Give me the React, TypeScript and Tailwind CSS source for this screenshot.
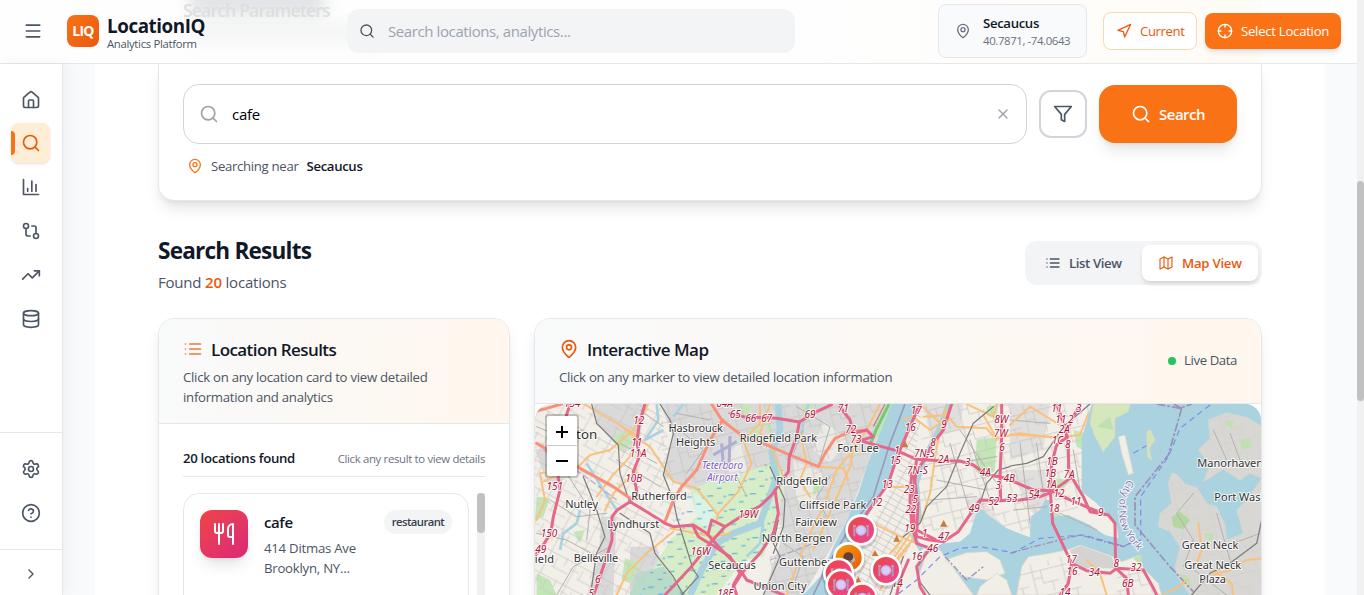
import React from "react";
import {
  ChevronRight,
  Database,
  GitCompare,
  House,
  MapPin,
  Menu,
  Search,
  Settings,
  TrendingUp,
  X,
} from "lucide-react";

type IconProps = { className?: string; paths: string[]; width?: number };

function Glyph({ className = "", paths, width = 2 }: IconProps) {
  return (
    <svg
      viewBox="0 0 24 24"
      fill="none"
      stroke="currentColor"
      strokeWidth={width}
      strokeLinecap="round"
      strokeLinejoin="round"
      className={className}
    >
      {paths.map((d) => (
        <path key={d} d={d} />
      ))}
    </svg>
  );
}

const BARS = ["M3 3v18h18", "M18 17V9", "M13 17V5", "M8 17v-3"];
const HELP = [
  "M12 2a10 10 0 1 0 0 20a10 10 0 1 0 0-20",
  "M9.09 9a3 3 0 0 1 5.83 1c0 2-3 3-3 3",
  "M12 17h.01",
];
const LIST = ["M8 6h13", "M8 12h13", "M8 18h13", "M3 6h.01", "M3 12h.01", "M3 18h.01"];
const CROSSHAIR = [
  "M12 2a10 10 0 1 0 0 20a10 10 0 1 0 0-20",
  "M22 12h-4",
  "M6 12H2",
  "M12 6V2",
  "M12 22v-4",
];
const NAVIGATION = ["M3 11L22 2L13 21L11 13L3 11Z"];
const FUNNEL = ["M22 3H2L10 12.46V19L14 21V12.46L22 3Z"];
const MAP = ["M3 6L9 3L15 6L21 3V18L15 21L9 18L3 21Z", "M9 3V18", "M15 6V21"];
const UTENSILS = [
  "M3 2v7c0 1.1.9 2 2 2h4a2 2 0 0 0 2-2V2",
  "M7 2v20",
  "M21 15V2a5 5 0 0 0-5 5v6c0 1.1.9 2 2 2h3Zm0 0v7",
];

/* ---------- Map data (three units per pixel) ---------- */

const WATER = "#aad3df";

const mapLabels: [string, number, number, number][] = [
  ["Hasbrouck", 497, 97, 163],
  ["Heights", 497, 138, 118],
  ["Ridgefield Park", 745, 126, 232],
  ["Rutherford", 387, 300, 167],
  ["Nutley", 155, 323, 99],
  ["Lyndhurst", 310, 383, 156],
  ["Belleville", 198, 487, 134],
  ["Secaucus", 606, 508, 142],
  ["North Bergen", 801, 427, 212],
  ["Union City", 750, 570, 159],
  ["Fort Lee", 984, 157, 125],
  ["Ridgefield", 816, 254, 154],
  ["Cliffside Park", 908, 328, 202],
  ["Fairview", 858, 378, 125],
  ["Guttenberg", 836, 498, 178],
  ["Great Neck", 2040, 448, 170],
  ["Great Neck", 2048, 507, 170],
  ["Plaza", 2048, 549, 80],
];

const exits: [string, number, number][] = [
  ["154", 127, 20], ["12", 326, 73], ["11", 320, 139], ["11A", 324, 171], ["10B", 311, 246],
  ["151", 74, 271], ["150", 57, 411], ["149", 24, 459], ["6", 203, 549], ["5", 184, 592],
  ["64A", 584, 20], ["65", 616, 55], ["66", 662, 65], ["67", 710, 65], ["19W", 655, 353],
  ["16W", 512, 466], ["18E", 586, 590], ["69", 840, 54], ["71", 940, 36], ["72", 962, 98],
  ["73", 978, 129], ["17", 1159, 42], ["16", 1141, 94], ["1", 1101, 163], ["15", 1096, 192],
  ["13", 1072, 263], ["12", 1040, 318], ["9", 1242, 84], ["8", 1209, 138], ["7N-S", 1183, 171],
  ["2A", 1241, 188], ["3", 1313, 198], ["7N-S", 1162, 223], ["23", 1138, 278], ["5", 1156, 309],
  ["22", 1142, 340], ["19", 1139, 396], ["1", 1184, 410], ["47", 1241, 420], ["46", 1208, 456],
  ["16", 1160, 480], ["49", 1333, 335], ["52", 1391, 314], ["53", 1446, 305], ["3", 1405, 267],
  ["4A", 1366, 228], ["4B", 1438, 247], ["8W", 1414, 68], ["7W", 1412, 110], ["6", 1416, 153],
  ["14", 1102, 560], ["11", 1580, 36], ["11", 1592, 69], ["3", 1646, 35], ["2", 1622, 70],
  ["2A", 1603, 99], ["1C", 1582, 133], ["8", 1613, 144], ["1B", 1566, 194], ["1B", 1561, 231],
  ["7A", 1617, 234], ["1A", 1563, 263], ["54", 1512, 294], ["12", 1587, 292], ["11", 1638, 316],
  ["18", 1572, 335], ["9", 1712, 347], ["17", 1624, 489], ["16", 1626, 525], ["34", 1693, 529],
  ["8", 1759, 502], ["32", 1818, 513], ["6B", 1793, 561], ["14", 1605, 588],
];

const motorways = [
  "M345 12L328 70L320 130L330 165L310 215L322 285L300 305L262 330L246 350L246 420L230 470L205 545L190 585",
  "M120 12L105 60L78 180L90 270L70 350L62 400L30 450L12 470",
  "M300 305L350 335L405 370L430 380L490 375L530 400L570 445L625 500L650 540L700 560L760 585",
  "M405 585L480 505L540 430L585 380L640 345L690 318L725 285L750 250L775 215L778 170L800 110L808 66",
  "M490 380L505 410L555 440L600 470L630 520L610 555L620 585",
  "M585 380L545 360L535 400",
  "M600 40L640 50L740 55L808 66L860 35L905 14",
  "M735 270L745 340L730 400L690 460L635 520L610 560",
  "M930 20L960 60L970 100L1010 90L1030 110L980 125",
  "M1000 125L1100 152L1160 178L1230 182L1290 183L1330 195L1370 225L1410 230L1440 240L1510 270L1570 272",
  "M1170 12L1140 80L1110 150L1095 190L1075 250L1040 300L1010 340L965 430",
  "M1265 12L1240 90L1205 135L1190 170L1158 215L1150 280L1152 370L1160 410L1200 420L1240 425L1285 395L1350 300L1410 302L1470 300L1530 290L1570 275",
  "M1145 220L1140 300L1145 370L1160 430L1200 445L1160 500L1170 560L1185 585",
  "M1160 178L1152 230L1164 310L1160 390L1215 418",
  "M1415 12L1415 110L1410 230L1412 300",
  "M1135 480L1110 540L1100 585",
  "M1580 12L1600 70L1612 110L1580 135L1565 190L1560 260L1568 370L1625 490L1615 550L1590 585",
  "M1650 12L1625 60L1608 95L1615 145L1616 215L1660 290L1680 335L1735 345L1755 370L1757 500",
  "M1570 272L1620 235M1570 272L1610 295L1680 325L1720 340",
  "M1625 490L1670 512L1740 520L1760 505L1840 510L1868 560L1880 585",
  "M1758 505L1790 535L1795 585",
];

const trunks = [
  "M12 35L50 25L95 12M20 130L150 205L250 260L300 295",
  "M545 12L575 60L640 110L700 130L780 165L865 200L885 160L915 115L960 95L1010 90",
  "M578 60L540 120L500 210L455 260L430 300L405 365",
];

const secondaries = [
  "M160 12L270 75L300 100L360 140L400 200L430 245L500 265L560 340",
  "M355 12L310 90L240 150L180 165L150 195L40 245",
  "M270 75L320 105L300 170L245 230L200 290",
  "M320 210L250 280L225 330",
  "M20 360L45 300L30 220L70 215",
  "M690 12L690 70L640 120L665 190L625 275L565 340L560 360",
  "M430 395L350 460L290 520L260 585M600 400L550 410L420 385",
  "M720 12L690 100L720 130L760 230",
  "M1050 12L1010 90L970 150L920 210L880 320L830 420L800 500L770 585",
  "M975 120L960 200L930 270L890 360L850 450",
  "M810 100L830 190L810 240L840 290M865 200L940 205L955 240",
  "M1180 50L1250 45L1280 80L1370 85L1400 120",
  "M1250 20L1220 140L1200 280L1175 360",
  "M1170 12L1230 70L1200 90L1150 50L1120 60",
  "M1070 260L1150 262M1030 370L1110 410L1160 430M1160 400L1090 500L1050 570",
  "M1150 390L1080 490M1130 440L1050 540M1115 420L1030 520",
  "M1310 12L1390 50L1400 12M1360 45L1400 115L1470 100L1580 115",
  "M1440 75L1500 20L1590 75M1440 103L1590 112L1650 105L1675 40",
  "M1670 480L1710 520L1730 585M1900 580L1940 565L1970 540M2005 370L2015 450L2000 490L2050 510L2105 550L2110 585",
  "M2050 525L2100 510L2150 480L2195 475",
];

const railways = [
  "M185 12L200 70L265 135L270 220L300 310M390 12L420 60L430 100L400 225L430 300L440 350L490 510L505 530L455 585",
  "M160 230L200 330L225 410L200 460L185 560M270 340L360 400L375 460L430 530L460 585",
  "M745 360L730 430L750 470L700 585M720 200L765 300L760 380L730 460",
  "M1390 20L1330 70L1290 160L1250 260L1190 320L1170 370L1120 410M1440 198L1490 190L1540 170L1600 80L1680 12",
  "M1440 200L1405 210L1370 250L1350 310M1080 585L1120 470M1160 500L1165 540L1200 585",
  "M2195 360L2180 430L2100 490L2040 520L1985 585",
];

const lanes = [
  "M20 80L90 110L160 90M60 300L140 350L230 340M110 220L180 330L170 420M20 400L110 420L220 480M80 585L130 500L240 440M270 130L380 190M260 180L390 260M330 30L400 80",
  "M440 40L540 60M450 90L520 150L470 220M620 230L650 290M800 20L900 80L870 180M820 90L790 160M900 230L860 290L890 350M760 430L820 470L790 560",
  "M1290 90L1400 250M1210 200L1400 170M1220 240L1370 270M1200 300L1340 290M1260 130L1320 340M1320 120L1390 330M1440 60L1560 70M1470 130L1500 370M1520 130L1540 280M1450 330L1550 320M1630 150L1650 270M1590 340L1700 390",
  "M1990 280L1940 340L1990 420L1960 500M2060 340L2100 480M2100 100L2130 180L2170 200M2050 90L2090 180M2110 430L2190 400M1980 500L2090 585",
];

function MapPinMark({ x, y, drink = false }: { x: number; y: number; drink?: boolean }) {
  return (
    <g transform={`translate(${x} ${y})`}>
      <circle r="51" cy="6" fill="#000" opacity="0.14" />
      <circle r="47" fill="#fff" />
      <circle r="39" fill={drink ? "url(#pinOrange)" : "url(#pinPink)"} />
      {drink ? (
        <g>
          <path d="M-12 -12L15 -8L20 8L8 18L-6 14Z" fill="#b9aeb8" />
          <ellipse cx="-1" cy="-3" rx="15" ry="13" fill="#5d4037" />
          <path d="M-10 8L4 20L10 10Z" fill="#8d6e63" />
        </g>
      ) : (
        <g>
          <path d="M-20 -10V19M20 -12V19" stroke="#b39ab8" strokeWidth="6" />
          <path d="M-24 -12h9M15 -12h9" stroke="#b39ab8" strokeWidth="6" />
          <circle r="16" cy="1" fill="#c9b8ee" />
          <circle r="11" cy="1" fill="#d9cdf9" />
        </g>
      )}
    </g>
  );
}

function StreetMap() {
  return (
    <svg viewBox="15 12 2178 573" className="block h-[191px] w-[726px] rounded-t-2xl">
      <defs>
        <linearGradient id="pinPink" x1="0" y1="0" x2="1" y2="1">
          <stop offset="0" stopColor="#ef4444" />
          <stop offset="1" stopColor="#ec4899" />
        </linearGradient>
        <linearGradient id="pinOrange" x1="0" y1="0" x2="1" y2="1">
          <stop offset="0" stopColor="#f59e0b" />
          <stop offset="1" stopColor="#ea580c" />
        </linearGradient>
        <pattern id="gridA" width="86" height="73" patternUnits="userSpaceOnUse" patternTransform="rotate(28)">
          <path d="M0 5H86M0 26H30M30 44H86M12 0V73M38 14V44M66 0V26" stroke="#c6c4c1" strokeWidth="2" fill="none" />
        </pattern>
        <pattern id="gridB" width="94" height="78" patternUnits="userSpaceOnUse" patternTransform="rotate(-14)">
          <path d="M0 8H94M20 0V78M46 8V48M20 30H46M46 48H94M74 48V78" stroke="#c3c1bf" strokeWidth="2" fill="none" />
        </pattern>
        <pattern id="gridC" width="30" height="17" patternUnits="userSpaceOnUse" patternTransform="rotate(29)">
          <path d="M0 4H30M8 0V17" stroke="#bdbbb9" strokeWidth="1.8" fill="none" />
        </pattern>
        <pattern id="marsh" width="64" height="44" patternUnits="userSpaceOnUse" patternTransform="rotate(-3)">
          <path d="M4 8h18M34 30h14M52 12h8" stroke="#4a9fe8" strokeWidth="3" fill="none" />
        </pattern>
        <path id="boundaryName" d="M1796 238C1764 285 1760 330 1772 370C1782 402 1800 425 1830 458" />
      </defs>

      <rect x="0" y="0" width="2200" height="600" fill="#f2efe9" />

      {/* Built-up areas */}
      <g fill="#d9d9d9">
        <path d="M390 12H1080L1010 200L960 340L900 450L820 585H700L760 400L720 230L560 250L480 270L400 230L430 110Z" />
        <path d="M190 12H340L330 130L280 160L200 70ZM215 350L260 350L250 585H170L205 480Z" />
        <path d="M15 150L120 120L150 200L60 270ZM300 440L380 440L420 585H300Z" />
        <path d="M1180 12H1300L1290 90L1200 110ZM1440 12L1560 12L1540 150L1440 180ZM1440 210L1550 210L1550 380L1500 330Z" opacity="0.7" />
        <path d="M1310 300L1350 290L1420 380L1330 370Z" opacity="0.6" />
      </g>
      <g fill="#ebe9e3">
        <path d="M790 180L880 220L850 320L800 300ZM880 60L950 120L900 190L850 150ZM590 150L640 130L650 210L600 240Z" />
      </g>

      {/* Wetlands and parks */}
      <path d="M480 270L560 235L640 220L740 180L775 240L740 350L700 470L640 480L560 585H400L350 540L420 420L500 350Z" fill="#d6edc8" />
      <path d="M320 520L400 500L470 585H300Z" fill="#b9dcc9" />
      <path d="M490 275L540 310L555 340L540 380L500 370Z" fill="#d9f3e5" />
      <g fill="#c3e6b6">
        <path d="M75 190L110 170L145 185L120 235L90 230ZM250 105L290 95L305 130L270 150ZM20 290L60 295L40 350L15 360ZM130 395L165 390L150 430ZM20 520L60 540L80 585H20Z" />
        <path d="M620 20L665 12L650 50ZM660 80L690 90L680 130L655 120ZM285 475L330 490L300 550L275 540Z" />
        <path d="M1060 12L1085 12L1050 110L1010 125L1035 80ZM1340 120L1400 110L1395 210L1360 240L1335 210ZM1090 120L1130 70L1130 120L1100 150Z" />
        <path d="M1630 90L1670 100L1660 150L1640 140ZM1570 235L1620 240L1590 280ZM1560 330L1620 360L1590 400L1565 390ZM1370 20L1405 12L1400 60L1370 45Z" />
        <path d="M815 20L850 12L835 70ZM700 60L725 50L720 110ZM850 230L880 250L850 290Z" />
      </g>
      <path d="M350 540L480 270L740 180L775 240L700 470L560 585H330Z" fill="url(#marsh)" />

      {/* Local streets */}
      <path d="M12 12H390L430 245L480 280L400 430L350 540L300 585H12Z" fill="url(#gridA)" />
      <path d="M390 12H1070L960 340L820 585H700L740 350L775 200L640 215L480 260L400 230Z" fill="url(#gridB)" />
      <path d="M1150 12H1180L1150 200L1150 420L1060 585H920L1010 400L1100 230Z" fill="url(#gridC)" />
      <path d="M1180 12H1680L1660 300L1600 380L1440 400L1340 380L1160 430Z" fill="url(#gridB)" />

      {/* Creeks */}
      <g fill="none" stroke={WATER} strokeLinejoin="round">
        <path d="M745 12L750 90L725 160L740 230L715 300L690 370L610 400L560 430L520 500L480 585" strokeWidth="20" />
        <path d="M380 12L385 60L345 120L400 90M460 12L430 50M170 190L220 270L260 330M150 330L140 370L100 400L90 450M835 12L810 110M700 370L690 430L650 470" strokeWidth="8" />
        <path d="M1255 12L1225 90L1185 170L1160 250L1168 350L1150 410L1175 450" strokeWidth="14" />
      </g>

      {/* Hudson */}
      <path d="M1085 12H1170L1140 80L1105 150L1080 240L1050 290L1015 345L960 440L930 500L895 585H820L870 530L910 440L955 350L985 280L1010 200L1045 110Z" fill={WATER} />
      <path d="M1077 12L1038 90L1015 150" fill="none" stroke="#7cc47f" strokeWidth="9" />
      <path d="M1065 12L1030 80" fill="none" stroke="#c98383" strokeWidth="4" />
      <path d="M1125 12L1080 130L1030 290L950 400L890 500L850 585" fill="none" stroke="#9686b2" strokeWidth="5" opacity="0.75" />

      {/* Sound and East River */}
      <path d="M1190 585L1160 520L1180 455L1240 430L1290 425L1320 400L1345 320L1375 345L1430 385L1500 412L1502 350L1530 330L1545 300L1560 300L1570 350L1615 345L1680 375L1725 405L1765 415L1760 375L1700 310L1655 275L1655 115L1680 30L1685 12H2195V585Z" fill={WATER} />
      <g fill="#f1eee8" stroke="#d9d4c9" strokeWidth="2">
        <path d="M1190 460L1230 450L1260 490L1330 585H1190L1165 530Z" />
        <path d="M1245 480L1310 458L1370 455L1410 480L1425 520L1370 540L1300 530Z" />
        <path d="M1340 585L1350 560L1400 520L1430 540L1445 585Z" />
        <path d="M1460 585L1475 500L1495 470L1560 460L1610 450L1650 435L1745 468L1775 485L1830 465L1840 505L1885 550L1895 585Z" />
        <path d="M1690 12H1800L1795 35L1755 55L1755 110L1720 155L1695 110L1680 70Z" fill="#d5e8bd" />
        <path d="M1765 110L1785 105L1810 220L1795 225L1775 160Z" />
        <path d="M1850 95L1862 90L1875 120L1858 145L1865 180L1852 170Z" fill="#d3e3b7" />
        <path d="M2035 60L2090 38L2150 52L2195 78V235L2160 220L2130 240L2080 208L2020 245L2040 195L2005 150L2040 115Z" fill="#d8d7d4" />
        <path d="M1925 220L1940 222L1965 252L2000 262L2030 310L2060 320L2085 375L2090 420L2140 400L2120 330L2150 300L2195 235V600H1990L1945 535L1935 500L1950 440L1920 395L1885 380L1890 340L1925 310L1915 250Z" fill="#d8d7d4" />
      </g>
      <path d="M1620 450L1650 437L1745 470L1760 505L1640 505Z" fill="#d4d3d1" />
      <path d="M1470 500L1640 460L1660 585H1465ZM1760 520L1840 510L1890 585H1760Z" fill="url(#gridB)" />
      <path d="M2035 60L2090 38L2195 78V220L2100 200L2040 130ZM1925 230L2000 262L2060 320L2085 420L2195 400V585H1990L1950 440L1890 360Z" fill="url(#gridB)" opacity="0.3" />
      <g fill="#bfe0b0">
        <path d="M1925 350L1950 335L1980 360L1960 388L1930 380Z" fill="#b4d6a0" />
        <path d="M2130 120L2160 115L2165 140L2135 150ZM2080 65L2110 60L2105 85ZM2020 400L2050 400L2045 430ZM1945 520L1975 530L1990 570ZM1810 475L1835 465L1835 500ZM1700 80L1740 50L1750 90Z" />
      </g>

      {/* Boundaries and ferry routes */}
      <g fill="none" strokeWidth="5">
        <path d="M1955 25L1915 165L1815 290V375L1920 500L1990 575M1880 12L1950 25L1985 12M1955 25L1930 12" stroke="#9d8fb5" strokeDasharray="26 6 8 6" />
        <path d="M1245 470L1310 540L1360 500M1440 460L1510 440L1650 405L1780 440L1815 420" stroke="#9d8fb5" strokeDasharray="20 6 6 6" strokeWidth="4" />
        <path d="M2040 15L1950 85L1915 170L1832 290V420L1780 438L1660 405L1530 415L1450 458L1350 440L1290 445L1230 470L1160 540L1100 585M1810 160L1850 137" stroke="#7d8bf0" strokeDasharray="18 12" strokeWidth="3.5" />
        <path d="M40 150L160 225L260 300M720 480L850 430" stroke="#a494bd" strokeDasharray="20 8" strokeWidth="4" opacity="0.7" />
      </g>

      {/* Airport */}
      <path d="M545 150L600 100L625 130L570 190L540 190Z" fill="#dadae2" />
      <path d="M600 108L597 200M550 165L620 125M575 130L580 195" stroke="#b1aecb" strokeWidth="9" fill="none" />

      <g fill="none" strokeLinecap="round" strokeLinejoin="round">
        {lanes.map((d) => (
          <path key={d} d={d} stroke="#b4b2b0" strokeWidth="3" />
        ))}
        {secondaries.map((d) => (
          <path key={d} d={d} stroke="#f9c27c" strokeWidth="6" />
        ))}
        {railways.map((d) => (
          <path key={d} d={d} stroke="#7b7b7b" strokeWidth="3.6" />
        ))}
        {trunks.map((d) => (
          <path key={d} d={d} stroke="#f8907a" strokeWidth="9" />
        ))}
        {motorways.map((d) => (
          <path key={d} d={d} stroke="#e5678a" strokeWidth="9" />
        ))}
      </g>
      <g fill="#c97c3c">
        <path d="M1125 122L1135 142H1115ZM1241 360L1252 380H1230ZM1100 405L1110 425H1090ZM1035 450L1045 468H1025ZM985 530L995 548H975Z" />
      </g>

      <g
        fontFamily="'Noto Sans', sans-serif"
        textAnchor="middle"
        strokeLinejoin="round"
        stroke="#fff"
        strokeOpacity="0.85"
        strokeWidth="6"
        paintOrder="stroke"
      >
        <g fontSize="30" fontStyle="italic" fill="#ad1437">
          {exits.map(([t, x, y]) => (
            <text key={`${t}-${x}-${y}`} x={x} y={y}>
              {t}
            </text>
          ))}
        </g>
        <g fontSize="31" fontStyle="italic" fill="#8461c4">
          <text x="577" y="207" textLength="124">Teterboro</text>
          <text x="577" y="243" textLength="92">Airport</text>
        </g>
        <text fontSize="31" fill="#8d7cab" textAnchor="start">
          <textPath href="#boundaryName">City of New York</textPath>
        </text>
        <g fontSize="33" fill="#333">
          {mapLabels.map(([t, x, y, w]) => (
            <text key={`${t}-${y}`} x={x} y={y} textLength={w}>
              {t}
            </text>
          ))}
          <text x="170" y="116" fontSize="40" textLength="64">ton</text>
          <text x="43" y="490" textLength="58">ield</text>
          <text x="2002" y="202" textAnchor="start">Manorhaven</text>
          <text x="2053" y="303" textAnchor="start">Port Washington</text>
        </g>
      </g>

      <MapPinMark x={993} y={390} />
      <MapPinMark x={956} y={473} drink />
      <MapPinMark x={1068} y={510} />
      <MapPinMark x={926} y={520} />
      <MapPinMark x={933} y={553} />
      <MapPinMark x={997} y={593} />
    </svg>
  );
}

/* ---------- Page ---------- */

function Header() {
  return (
    <header className="relative flex h-16 w-[1357px] shrink-0 items-center overflow-hidden border-b border-[#e5e7eb] bg-[#fefefe]">
      <div className="absolute left-[800px] top-0 h-[63px] w-[461px] bg-gradient-to-r from-transparent to-[#fffcf7]" />
      <div className="absolute left-[190px] top-[-10px] h-[24px] w-[135px] bg-gray-500/20 blur-[8px]" />
      <div className="absolute left-[190px] top-[26px] h-[14px] w-[190px] bg-gray-500/10 blur-[9px]" />
      <div className="absolute left-[183px] top-[-4px] whitespace-nowrap text-[17.6px] font-semibold leading-7 tracking-[-0.85px] text-[#dedede]">
        Search Parameters
      </div>

      <Menu className="relative ml-[23px] -mt-0.5 size-5 text-[#4b5563]" />
      <div className="relative ml-6 -mt-0.5 flex size-8 items-center justify-center rounded-lg bg-gradient-to-br from-[#f97316] to-[#ea580c] text-[14px] font-bold tracking-[-0.7px] text-white">
        LIQ
      </div>
      <div className="relative ml-2 w-[240px] whitespace-nowrap">
        <div className="mt-[3px] text-[18.8px] font-bold leading-[22px] tracking-[-0.42px] text-[#111827]">LocationIQ</div>
        <div className="text-[11.3px] leading-[14px] tracking-[-0.3px] text-[#4b5563]">Analytics Platform</div>
      </div>

      <div className="relative -mt-px flex h-11 w-[448px] items-center rounded-xl bg-[#f3f4f6] pl-3">
        <Search className="size-4 text-[#4b5563]" />
        <span className="ml-[13px] text-[15px] tracking-[-0.4px] text-[#9ca3af]">Search locations, analytics...</span>
      </div>

      <div className="relative -mt-[2px] ml-[143px] flex h-[54px] w-[149px] items-center rounded-lg border border-[#e5e7eb] bg-[#f9fafb] pl-4">
        <MapPin className="size-4 text-[#6b7280]" />
        <div className="ml-3 whitespace-nowrap">
          <div className="text-[13.2px] font-semibold leading-5 tracking-[-0.35px] text-[#111827]">Secaucus</div>
          <div className="text-[11.4px] leading-4 tracking-[-0.38px] text-[#6b7280]">40.7871, -74.0643</div>
        </div>
      </div>
      <button className="relative -mt-px ml-4 flex h-[38px] w-[94px] items-center rounded-lg border border-[#fed7aa] bg-white pl-3 text-[#ea580c]">
        <Glyph paths={NAVIGATION} className="size-4" />
        <span className="ml-2 mt-0.5 text-[13.2px] tracking-[-0.4px]">Current</span>
      </button>
      <button className="relative -mt-px ml-2 flex h-9 w-[136px] items-center rounded-lg bg-[#f97316] pl-3 text-white shadow-md">
        <Glyph paths={CROSSHAIR} className="size-4" />
        <span className="ml-2 mt-0.5 whitespace-nowrap text-[13.2px] font-medium tracking-[-0.28px]">Select Location</span>
      </button>
    </header>
  );
}

function Sidebar() {
  const item = "flex h-10 w-10 items-center justify-center";
  return (
    <aside className="relative z-10 flex w-[63px] shrink-0 flex-col border-r border-[#e5e7eb] bg-white text-[#4b5563] shadow-[4px_0_12px_rgba(15,23,42,0.05)]">
      <nav className="flex h-[368px] flex-col items-start gap-1 pl-[11px] pt-[15px]">
        <span className={item}><House className="size-5 translate-y-px" /></span>
        <span className="relative flex h-10 w-[39px] items-center justify-center rounded-lg bg-[#ffedd5] text-[#ea580c] shadow-sm">
          <Search className="size-5" />
          <span className="absolute left-0 top-2 h-6 w-1 rounded-r bg-[#f97316]" />
        </span>
        <span className={item}><Glyph paths={BARS} className="size-5" /></span>
        <span className={item}><GitCompare className="size-5" /></span>
        <span className={item}><TrendingUp className="size-5" /></span>
        <span className={item}><Database className="size-5" /></span>
      </nav>
      <div className="flex h-[117px] flex-col gap-1 border-t border-[#e5e7eb] pl-[11px] pt-4">
        <span className={item}><Settings className="size-5" /></span>
        <span className={item}><Glyph paths={HELP} className="size-5" /></span>
      </div>
      <div className="flex flex-1 justify-center border-t border-[#e5e7eb] pt-4">
        <ChevronRight className="size-4" />
      </div>
    </aside>
  );
}

function SearchPanel() {
  return (
    <section className="h-[137px] rounded-b-2xl border border-t-0 border-[#e5e7eb] bg-white px-6 pt-5 shadow-lg">
      <div className="flex items-center gap-3">
        <div className="flex h-[60px] w-[844px] items-center rounded-2xl border border-[#d1d5db] bg-white pl-[15px] pr-[15px]">
          <Search className="size-5 text-[#9ca3af]" />
          <span className="ml-[13px] flex-1 text-[15px] tracking-[-0.3px] text-black">cafe</span>
          <X className="size-4 text-[#9ca3af]" />
        </div>
        <button className="flex size-12 items-center justify-center rounded-xl border-2 border-[#d1d5db] text-[#4b5563]">
          <Glyph paths={FUNNEL} className="size-5" />
        </button>
        <button className="flex h-[58px] w-[138px] items-center rounded-2xl bg-[#f97316] pl-8 text-white shadow-lg">
          <Search className="size-5" />
          <span className="ml-2 text-[15px] font-semibold tracking-[-0.5px]">Search</span>
        </button>
      </div>
      <div className="mt-3 flex h-5 items-center pl-1">
        <MapPin className="size-4 text-[#f97316]" />
        <span className="ml-2 mt-0.5 text-[13.2px] tracking-[-0.32px] text-[#4b5563]">Searching near</span>
        <span className="ml-2 mt-0.5 text-[13.2px] font-semibold tracking-[-0.35px] text-[#111827]">Secaucus</span>
      </div>
    </section>
  );
}

function ResultsCard() {
  return (
    <section className="h-[400px] w-[352px] overflow-hidden rounded-2xl border border-[#e5e7eb] bg-white shadow-lg">
      <div className="h-[105px] border-b border-[#e5e7eb] bg-gradient-to-r from-[#f9fafb] to-[#fff7ed] px-6 pt-[19px]">
        <div className="flex h-6 items-center">
          <Glyph paths={LIST} className="size-5 -translate-y-px text-[#ea580c]/80" />
          <h3 className="ml-2 text-[17px] font-semibold tracking-[-0.58px] text-[#111827]">Location Results</h3>
        </div>
        <p className="mt-[5px] whitespace-nowrap text-[13.2px] leading-5 tracking-[-0.27px] text-[#4b5563]">
          Click on any location card to view detailed
          <br />
          information and analytics
        </p>
      </div>
      <div className="px-6">
        <div className="flex h-[53px] items-center justify-between border-b border-[#e5e7eb] pt-[17px]">
          <span className="text-[13.2px] font-semibold tracking-[-0.3px] text-[#111827]">20 locations found</span>
          <span className="text-[11.4px] tracking-[-0.34px] text-[#6b7280]">Click any result to view details</span>
        </div>
        <div className="mt-4 flex h-[200px] justify-between">
          <article className="flex w-[286px] rounded-2xl border border-[#e5e7eb] p-4">
            <div className="flex size-12 shrink-0 items-center justify-center rounded-xl bg-gradient-to-br from-[#ef4444] to-[#db2777] text-white shadow-lg">
              <Glyph paths={UTENSILS} className="size-6" />
            </div>
            <div className="ml-4 flex-1">
              <div className="flex h-6 justify-between">
                <h4 className="text-[15px] font-semibold leading-6 tracking-[-0.4px] text-[#111827]">cafe</h4>
                <span className="flex h-6 w-[68px] items-center justify-center rounded-full bg-[#f3f4f6] pt-px text-[11.3px] font-semibold tracking-[-0.58px] text-[#374151]">
                  restaurant
                </span>
              </div>
              <p className="mt-1 text-[13.2px] leading-5 tracking-[-0.24px] text-[#4b5563]">
                414 Ditmas Ave
                <br />
                Brooklyn, NY...
              </p>
            </div>
          </article>
          <div className="w-2 bg-[#f1f1f1]">
            <div className="h-10 rounded bg-[#c1c1c1]" />
          </div>
        </div>
      </div>
    </section>
  );
}

function MapCard() {
  return (
    <section className="h-[400px] w-[728px] overflow-hidden rounded-2xl border border-[#e5e7eb] bg-white shadow-lg">
      <div className="flex h-[85px] justify-between border-b border-[#e5e7eb] bg-gradient-to-r from-[#f9fafb] to-[#fff7ed] px-6 pt-[19px]">
        <div>
          <div className="flex h-6 items-center">
            <MapPin className="size-5 -translate-y-px text-[#ea580c]" />
            <h3 className="ml-2 text-[17px] font-semibold tracking-[-0.5px] text-[#111827]">Interactive Map</h3>
          </div>
          <p className="mt-[5px] text-[13.2px] leading-5 tracking-[-0.29px] text-[#4b5563]">
            Click on any marker to view detailed location information
          </p>
        </div>
        <div className="mt-[13px] flex h-5 items-center gap-2">
          <span className="size-2 rounded-full bg-[#22c55e]" />
          <span className="text-[13.2px] tracking-[-0.4px] text-[#4b5563]">Live Data</span>
        </div>
      </div>
      <div className="relative">
        <StreetMap />
        <div className="absolute left-[10px] top-[10px] flex w-[34px] flex-col rounded border-2 border-black/20 bg-white bg-clip-padding">
          <button className="flex h-[30px] items-center justify-center border-b border-[#ccc]">
            <svg viewBox="0 0 12 12" className="size-3 translate-y-px"><path d="M6 0V12M0 6H12" stroke="#000" strokeWidth="2" /></svg>
          </button>
          <button className="flex h-[30px] items-center justify-center">
            <svg viewBox="0 0 12 12" className="size-3"><path d="M0 6H12" stroke="#000" strokeWidth="2" /></svg>
          </button>
        </div>
      </div>
    </section>
  );
}

export default function App() {
  return (
    <div className="flex h-[595px] w-[1364px] overflow-hidden bg-[#f8fafc] font-['Open_Sans','Noto_Sans',sans-serif]">
      <div className="flex w-[1357px] shrink-0 flex-col">
        <Header />
        <div className="flex min-h-0 flex-1">
          <Sidebar />
          <main className="ml-8 h-[531px] w-[1230px] overflow-hidden bg-white px-[63px]">
            <SearchPanel />
            <div className="mt-8 flex h-16 items-start justify-between">
              <div>
                <h2 className="h-9 text-[22.6px] font-bold leading-9 tracking-[-0.8px] text-[#111827]">Search Results</h2>
                <p className="text-[15px] leading-[26px] tracking-[-0.2px] text-[#4b5563]">
                  Found <span className="font-semibold text-[#ea580c]">20</span> locations
                </p>
              </div>
              <div className="mt-2 flex h-11 w-[237px] items-center rounded-xl bg-[#f3f4f6] p-1">
                <button className="flex h-9 w-[113px] items-center pl-4 text-[#4b5563]">
                  <Glyph paths={LIST} className="size-4" />
                  <span className="ml-2 mt-0.5 text-[13.2px] font-semibold tracking-[-0.4px]">List View</span>
                </button>
                <button className="flex h-9 w-[116px] items-center rounded-lg bg-white pl-4 text-[#ea580c] shadow-md">
                  <Glyph paths={MAP} className="size-4" width={1.7} />
                  <span className="ml-2 mt-0.5 text-[13.2px] font-semibold tracking-[-0.25px]">Map View</span>
                </button>
              </div>
            </div>
            <div className="mt-[21px] flex gap-6">
              <ResultsCard />
              <MapCard />
            </div>
          </main>
        </div>
      </div>
      <div className="w-[7px] shrink-0 bg-[#f1f1f1] pt-[181px]">
        <div className="h-[220px] rounded bg-[#c1c1c1]" />
      </div>
    </div>
  );
}
